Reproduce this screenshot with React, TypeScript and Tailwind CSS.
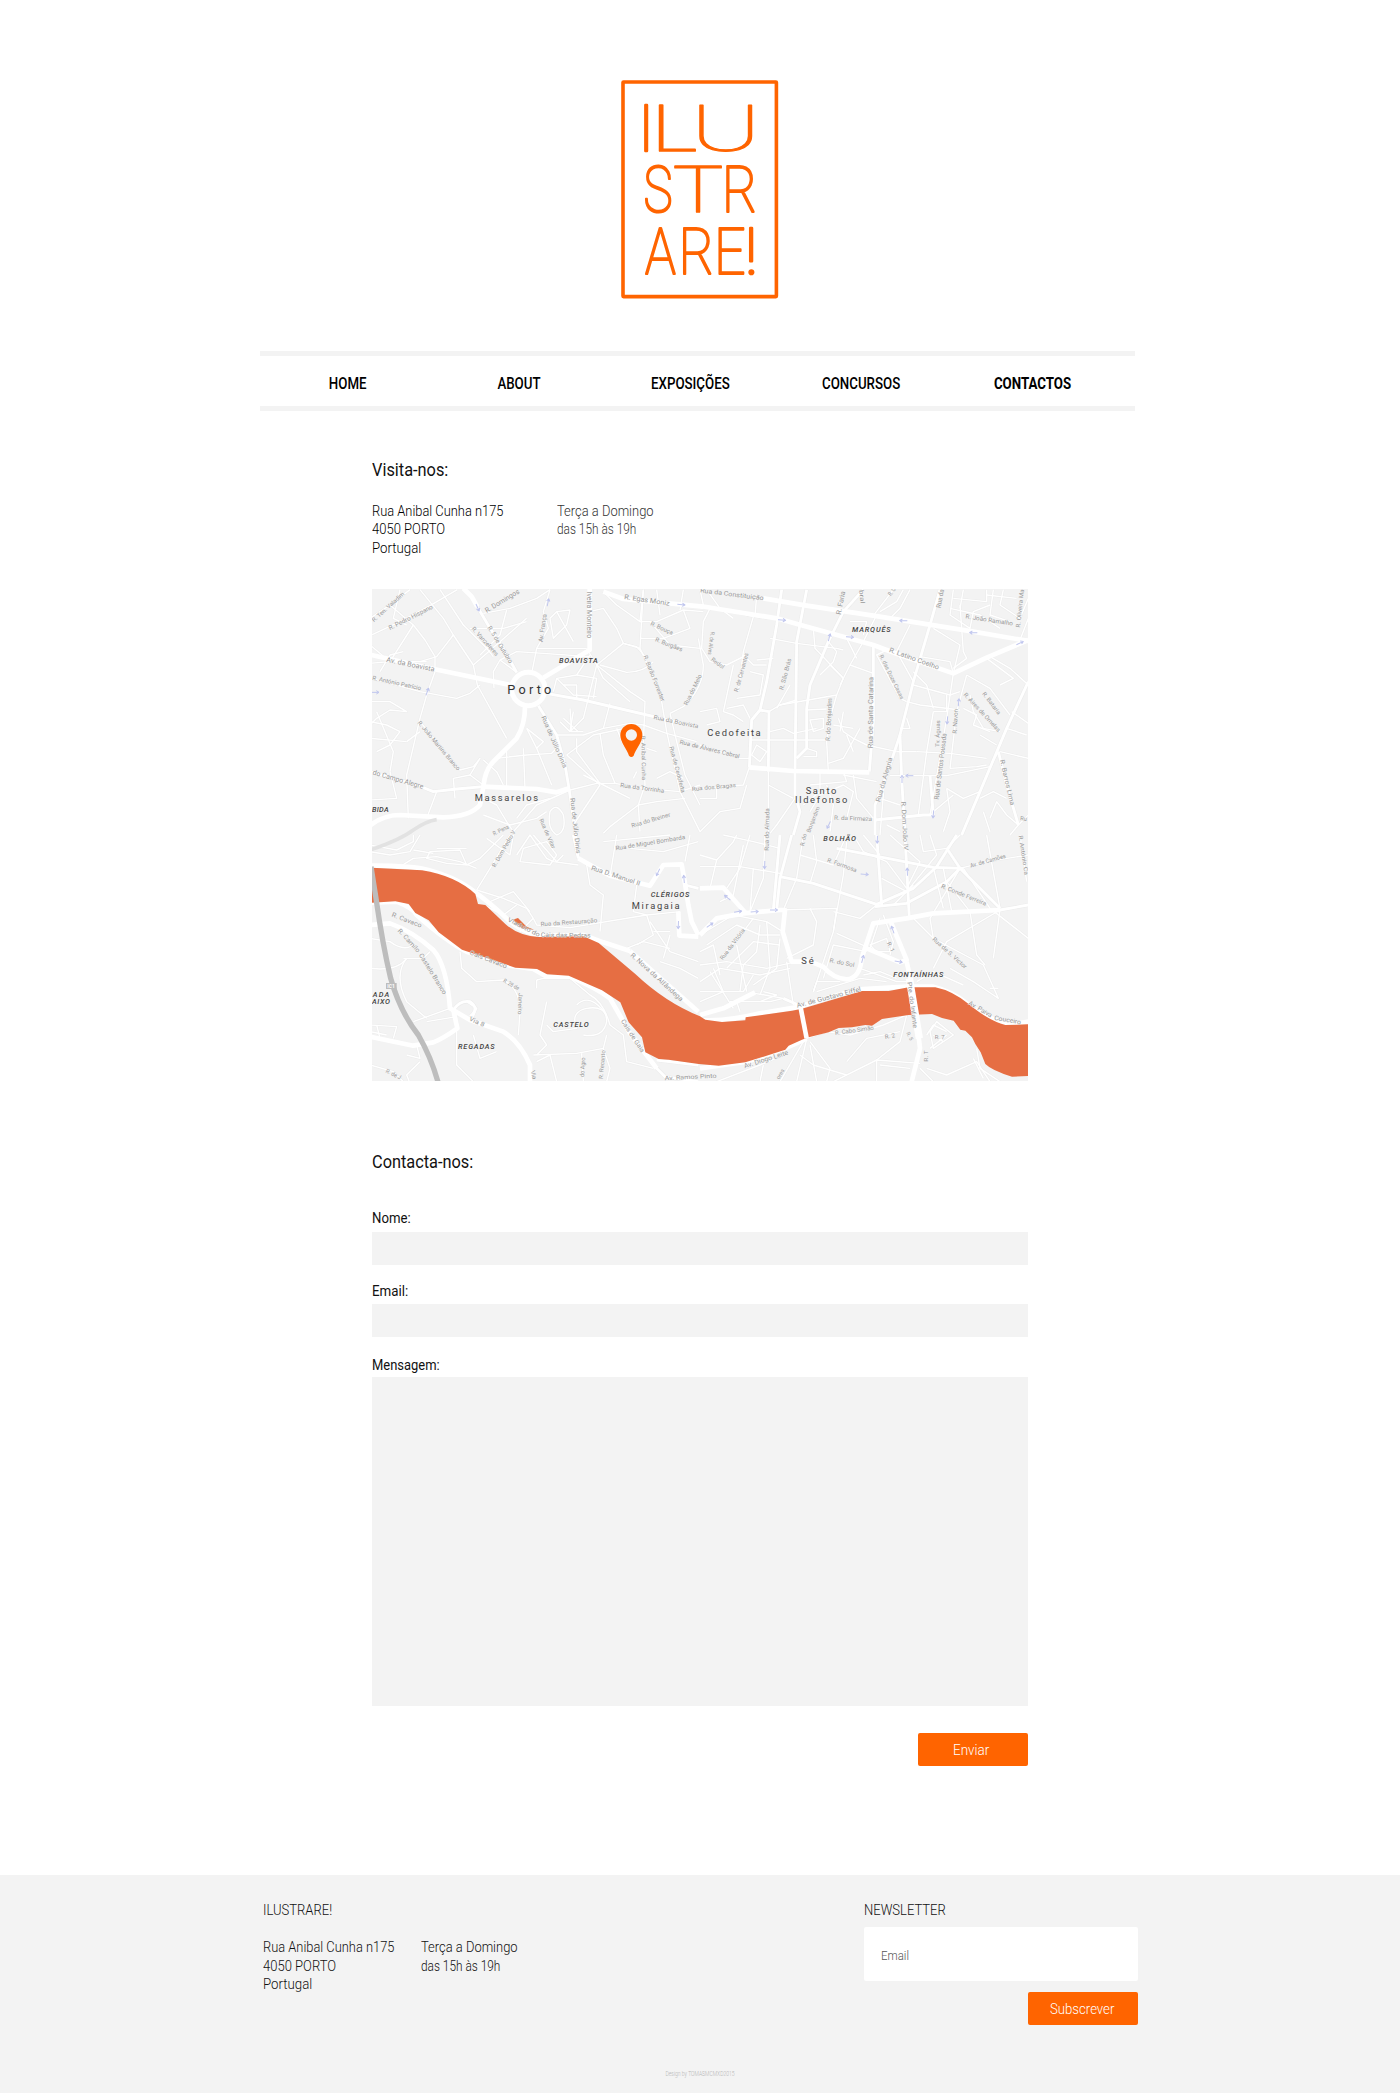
import React from "react";

type Quad = { dx: number; dy: number; major: string[]; mid: string[]; minor: string[] };
type Street = [string, number, number, number, number, number?];
type Arrow = [number, number, number];

// The map is authored at three units per pixel, in four sheets.
const sheets: Quad[] = [
  {
    dx: -6,
    dy: -12,
    major: [
      "M0 209 L180 250 L420 300",
      "M520 278 L600 230 L659 195 L659 10",
      "M700 20 L760 42 L1000 65",
      "M465 365 Q465 420 440 460 L370 530 Q345 555 340 605 L330 660 Q300 695 220 697 L90 690 Q40 690 0 722",
      "M340 605 L500 612 L560 622 L597 610",
      "M280 10 L305 35 L322 65",
    ],
    mid: [
      "M505 362 L560 450 L585 540 L597 610 L625 805",
      "M322 65 L360 130 L400 190 L440 262",
      "M0 560 L140 600 L190 620 L260 612 L340 605",
      "M528 325 L640 345 L780 378 L980 425",
    ],
    minor: [
      "M0 152 L90 110 L180 62 L262 14", "M0 100 L60 60 L120 14", "M60 60 L130 120 L165 165 L195 215 L195 250",
      "M150 14 L220 100 L250 150 L310 240 L322 300 L410 460", "M130 120 L60 230 L0 235", "M250 150 L200 215 L150 230",
      "M210 14 L280 120 L350 190 L370 215", "M340 85 L420 70 L500 40 L540 14", "M540 14 L520 80 L535 130 L500 190 L487 255",
      "M0 280 L80 300 L150 320 L260 340 L300 325 L330 300", "M195 260 L170 330 L150 400 L110 570 L115 700",
      "M0 350 L60 350 L110 380 L60 375 L20 400 L0 420", "M0 410 L50 420 L90 440 L60 480 L20 500", "M0 460 L110 470",
      "M20 380 L70 500 L60 560", "M150 410 L200 470 L270 555 L310 545 L330 520 L300 570 L340 600",
      "M300 570 L250 580 L255 640", "M340 525 L380 560 L400 600", "M410 490 L410 610", "M380 520 L470 510 L545 505 L560 490",
      "M460 490 L465 610", "M470 430 L500 490 L545 600", "M470 430 L520 470 L500 490", "M440 262 L390 225 L370 260 L372 310",
      "M390 225 L440 200 L520 205 L659 215", "M500 190 L600 190 L650 190", "M540 100 L560 80 L600 75 L590 120 L550 160 Z",
      "M560 80 L610 170", "M650 190 L680 240 L780 320 L825 350 L820 480", "M680 240 L640 400 L600 440", "M680 240 L760 175 L800 185 L830 220",
      "M660 210 L620 270 L560 280 L550 320", "M560 280 L610 330 L680 335", "M620 270 L680 280 L670 340",
      "M580 300 L620 300 L620 340", "M720 355 L700 430 L640 450 L560 450", "M700 430 L780 415 L820 420 L890 445 L980 470",
      "M590 510 L670 450 L790 425", "M690 445 L700 510 L735 595 L680 595 L600 615 L500 660 L430 740",
      "M735 595 L820 610 L930 620", "M620 460 L620 500 L690 595", "M590 510 L690 600", "M610 720 L690 600",
      "M680 240 L700 280 L780 350", "M610 380 L600 440 L570 410", "M580 400 L625 440", "M600 370 L605 440 L640 440",
      "M659 80 L700 70 L740 130 L760 175 L810 190", "M700 20 L740 60 L810 110 L820 14", "M820 14 L810 190 L870 320 L890 440 L930 620 L990 740",
      "M810 110 L860 110 L940 75 L1000 80", "M810 160 L880 160 L960 130 L940 75", "M860 14 L870 90", "M940 14 L930 75",
      "M840 110 L900 180 L990 190", "M690 240 L770 262 Q820 262 850 230", "M900 385 L940 365 Q1000 310 1000 240 L985 160", "M900 385 L920 470 L945 570 L990 660",
      "M820 480 L825 600 L805 660 L810 740", "M805 660 L860 650 L945 640", "M805 660 L720 725 L700 745", "M860 500 L830 490",
      "M930 620 L990 600", "M340 640 L380 660 L410 710 L430 740", "M340 690 L420 720 L500 700 L530 680",
      "M540 680 Q560 650 580 690 Q590 740 560 750 Q530 730 540 680 Z", "M440 700 L470 660 L540 640", "M200 620 L170 700", "M60 560 L80 640 L0 645",
      "M90 14 L70 100 L110 120", "M0 180 L60 230 L170 230", "M310 240 L390 170 L470 100", "M300 130 L400 130 L470 110",
      "M410 75 L390 150 L330 210", "M30 260 L60 210 L100 200", "M110 470 L150 440", "M640 570 L700 600 L780 640",
      "M740 430 L760 480 L790 490", "M790 580 L800 560 M860 580 L900 560 L940 580",
    ],
  },
  {
    dx: 984,
    dy: -12,
    major: [
      "M0 63 L230 100 L310 122 L520 180 L600 210 L760 265 L860 218 L985 165",
      "M190 40 L320 62 L520 92 L820 140 L985 168",
      "M148 547 L280 558 L508 562",
    ],
    mid: [
      "M245 14 L230 120 L200 290 L180 375 L155 405 L148 547",
      "M320 14 L290 170 L285 560 L285 630 L300 680 L280 750",
      "M520 180 L520 410 L508 560", "M720 14 L690 120 L640 290 L600 450 L560 570 L525 660 L525 750",
      "M180 375 L207 380 L205 560", "M290 520 L320 490 L320 370 L330 300 L385 170 L430 80 L490 14",
      "M985 290 L920 430 L840 620 L785 750", "M600 450 L605 580 L615 750",
      "M895 500 L920 600 L955 720", "M690 570 L700 690 L670 690 L525 705",
    ],
    minor: [
      "M0 14 L10 60", "M20 14 L60 70 L100 100", "M30 70 L10 110 L5 190 L30 230 L80 240 L140 210", "M60 70 L160 95 L130 200 L115 320",
      "M170 30 L165 95 L200 100", "M210 160 L290 175 L410 190 L430 195", "M340 130 L345 190 L430 280 L410 330 L240 360 L207 380",
      "M385 170 L410 200 L400 230 L360 270", "M390 240 L430 280", "M240 360 L290 345", "M410 330 L390 400 L380 470 L385 560",
      "M450 240 L520 265", "M490 170 L450 240 L420 300", "M470 220 L440 160", "M320 375 L380 372", "M210 440 L250 430 L280 445 L350 430",
      "M150 465 L380 465", "M330 405 L370 400 L370 430 L340 440 Z", "M320 490 L350 500 L350 515 L310 515", "M385 535 L430 520 L480 430",
      "M415 400 L430 440 L460 460 L500 480 L590 500", "M400 420 L460 430 M430 380 L420 440", "M440 450 L460 500",
      "M100 240 L70 380 L100 390 L130 410", "M150 260 L190 270 L180 330 L110 340", "M130 210 L160 240 L200 240", "M170 225 L220 220",
      "M80 370 L130 360 L150 400", "M0 380 L50 370 L60 410 L20 420", "M170 480 L155 510 L180 530 L200 500 Z", "M0 480 L120 520 L148 520",
      "M0 610 L130 600 L148 547", "M0 640 L50 640 L50 600", "M140 600 L120 670 L60 680 L0 740", "M205 560 L205 750",
      "M205 600 L280 640", "M270 300 L230 370", "M285 640 L230 720 L210 745", "M330 600 L440 590 L430 560",
      "M330 680 L360 630 L430 600 L460 620 L440 700", "M380 600 L400 660 L390 740", "M460 570 L470 640 L520 700", "M530 590 L430 570",
      "M360 560 L360 620 L310 660", "M570 100 L600 70 L630 14", "M540 80 L590 50 L610 14", "M520 92 L560 40 L580 14",
      "M490 170 L530 90", "M450 110 L500 110 L490 150", "M630 120 L590 200 L640 290", "M560 195 L530 210 L600 340 L620 350",
      "M640 300 L750 330 L780 320", "M620 350 L660 360 L780 375", "M640 260 L680 300 L700 370", "M660 215 L750 230 L760 265",
      "M760 265 L740 400 L690 690", "M800 270 L770 380 L750 550", "M700 380 L680 500 L655 690", "M700 380 L740 380 L740 330",
      "M650 500 L750 505 L860 520", "M570 572 L740 572 L870 545 L895 500", "M590 500 L650 500", "M620 400 L630 430 L600 430",
      "M750 550 L830 545 L860 540", "M760 14 L750 90 L810 130 L820 80 L870 60", "M760 40 L860 50 L860 14", "M750 70 L840 90 L900 130",
      "M790 14 L780 70", "M880 14 L870 90 L930 110", "M910 14 L900 60 L960 100 L985 40", "M860 30 L950 40", "M700 130 L780 180 L760 265",
      "M780 60 L790 200 L800 220 L760 250", "M960 165 L985 100", "M690 120 L760 130 L820 140", "M870 215 L930 250 L985 300",
      "M860 220 L940 280 L900 300", "M800 270 L870 310 L930 390", "M810 330 L820 380 L850 430 L900 440", "M790 370 L830 390 L820 420 L870 440",
      "M840 450 L890 480", "M920 430 L980 450", "M935 380 L985 415", "M900 500 L985 520", "M740 610 L750 680 L730 740", "M740 610 L790 640 L840 620",
      "M840 640 L880 620 L920 640", "M870 700 L890 650 L920 690 L955 720 L985 690", "M850 680 L870 740", "M955 720 L930 750", "M700 680 L760 630",
      "M555 570 L540 750", "M560 720 L600 740", "M540 640 L600 660",
    ],
  },
  {
    dx: -6,
    dy: 738,
    major: [
      "M0 92 Q130 92 175 105 Q250 125 300 160 Q370 210 420 260 Q470 300 530 302 L640 300 L700 322 L780 348",
      "M625 70 L670 95 L720 122 L840 152 L880 90 L935 88 L945 145 L955 210 L965 260 L985 300",
      "M925 230 L928 302 L985 305",
      "M0 270 L60 265 Q130 290 190 345 Q230 390 240 520 L300 555 L400 590 Q450 620 480 690 L480 750",
      "M0 203 L80 200 Q130 220 140 240 Q230 320 290 350 L420 392 L490 402 L530 425 L600 425 Q680 460 720 490 Q760 560 780 595 L860 700",
      "M250 525 L262 580 Q220 610 190 622 L130 632 L0 605",
      "M780 348 Q860 420 985 530",
    ],
    mid: ["M250 525 Q270 495 300 500 Q330 520 300 545", "M610 0 L625 70", "M945 150 L985 160", "M850 690 L885 725 L985 740", "M860 675 L985 690"],
    minor: [
      "M0 30 L80 45 L130 20 L130 0", "M0 50 L60 60 L120 50 L150 0", "M90 95 L130 70 L200 65 L270 80 L320 100", "M170 70 L180 50 L270 45 L290 90 L230 85 Z",
      "M130 45 L190 55 M200 40 L290 40", "M320 165 L360 100 L420 0", "M350 10 L420 60 L430 0", "M440 60 L480 0 L530 70 L550 80 L625 90",
      "M460 40 L530 20 L560 60 L540 90 L450 80 Z", "M490 0 L560 80 L580 60", "M320 165 L400 190 L470 220 L490 250 L450 290", "M360 200 L430 170 L480 230",
      "M340 210 L400 240 L440 210", "M490 250 L500 270 L600 278 L830 240 L930 230", "M650 90 L660 150 L700 180 L690 290", "M740 0 L720 125",
      "M780 40 L880 50 L985 20", "M700 20 L900 0", "M960 0 L945 80", "M800 150 L790 230 L830 240", "M830 240 L850 300 L800 330",
      "M850 290 L900 290 M770 340 L820 320 L900 340", "M840 260 L900 350 L985 380", "M870 380 L930 400 L985 430", "M900 300 L880 370",
      "M0 310 L60 320 Q100 350 130 330", "M0 400 Q80 410 110 370", "M100 370 L160 370 L180 350", "M130 560 L240 520", "M170 560 L260 545 L262 580",
      "M110 370 Q70 420 110 500 L170 550", "M0 570 L80 575 L70 610", "M20 570 L30 610", "M0 590 L50 600", "M140 630 L150 670 L110 660", "M0 690 L70 710 L100 740",
      "M150 680 L110 720 L120 745", "M270 350 L275 400 L320 440 L400 435 Q450 460 450 530 L445 600", "M290 500 L320 520 L310 545",
      "M260 580 L260 690 L310 740", "M310 600 L330 670 L380 650", "M500 435 L520 430 L610 430", "M500 435 L500 460", "M600 430 L660 480 Q700 500 720 570",
      "M530 570 L550 590 L620 580 Q600 530 650 520 Q710 510 710 560 Q700 610 640 600", "M620 510 Q660 470 710 540", "M530 500 L510 600 L530 630 L500 660",
      "M490 660 L620 655 L700 640 L710 600", "M635 655 L640 740", "M700 640 L720 700 L710 740", "M720 570 L760 600 L770 680 L850 700",
      "M400 0 L330 70 L290 90", "M500 680 L540 660 L560 740",
    ],
  },
  {
    dx: 984,
    dy: 738,
    major: [
      "M0 300 L50 250 L130 235 L240 225 L255 225 L248 290 L275 380 L330 380 L370 395 Q400 430 440 433 Q480 430 485 370 L520 265 L620 250 L700 235 L900 225",
      "M0 160 L70 158 L135 232", "M500 340 L600 382 L620 375 L570 255", "M620 380 L640 470 L660 640 L635 740",
      "M0 540 L70 520 L165 472", "M0 555 Q80 560 180 535 L300 515 Q400 480 490 462 L620 455 L700 455 Q760 470 800 505 Q880 560 930 570 L985 560",
      "M0 700 L140 680 Q240 650 320 610",
    ],
    mid: [
      "M240 0 L220 225", "M275 0 L240 130 L230 225", "M240 125 L340 145 L530 208 L640 160 L710 95 L770 0", "M530 0 L545 210", "M615 0 L628 250",
      "M410 40 L700 97 L790 100", "M525 215 L620 205 L740 140 L780 100", "M740 40 L780 100 L900 220", "M250 490 L295 510", "M900 225 L985 210",
    ],
    minor: [
      "M0 60 L50 75 L100 20 L110 0", "M50 75 L30 160", "M0 95 L120 95 L240 115", "M150 0 L120 100 L80 160", "M70 0 L160 20 L240 40", "M130 30 L100 180 L60 200",
      "M195 0 L190 130 L150 230", "M160 100 L150 230", "M310 0 L290 130 L250 225", "M340 0 L350 80 L330 145", "M300 60 L400 90 L440 0", "M440 20 L430 120 L400 290",
      "M240 225 L410 220 L400 290 L340 470", "M330 220 L350 260 L340 330 L260 370", "M410 295 L510 340 L540 250", "M400 230 L480 250 L530 210",
      "M460 0 L490 50 L560 80 L620 160", "M490 0 L540 60", "M570 0 L660 80 L620 160", "M545 130 L620 170 L710 60 L690 0", "M580 210 L640 150",
      "M660 0 L670 50 L740 40 L780 0", "M700 97 L730 220", "M730 100 L755 230", "M740 140 L810 230 L830 360 L855 390", "M780 100 L860 80 L985 60",
      "M790 100 L870 220 L985 310", "M860 0 L900 220", "M960 0 L980 140", "M780 100 L690 250 L700 310", "M900 225 L740 320 L700 400", "M900 225 L880 370",
      "M640 250 L700 310 L850 390 L895 490 L880 480 L820 440 L750 400", "M870 460 L895 460", "M650 440 L700 410 L790 450", "M550 240 L580 320 L570 360",
      "M510 330 L560 310 L570 350 L530 350 Z", "M490 420 L540 410 L590 430", "M480 400 L590 440 L620 440", "M350 470 L480 430 L560 440",
      "M340 470 L350 440 L420 440", "M370 430 L400 330 L500 350", "M0 300 L100 240 L200 260 L248 290", "M20 330 L110 270 L180 300 L240 300", "M60 370 L130 290 L160 250",
      "M80 400 L160 320 L240 330", "M0 390 L80 380 L200 400 L290 380", "M0 440 L60 400 L180 420 L270 400", "M40 400 L70 470 L0 500", "M0 470 L130 470 L160 420",
      "M110 330 L140 470", "M180 270 L170 350 L130 390 L120 470", "M200 260 L210 400 L180 480", "M0 350 L40 330 L60 420", "M240 310 L230 400 L160 450",
      "M90 500 L210 500 L250 490", "M165 475 L250 490", "M190 470 L230 480 L180 500", "M60 520 L110 500 L120 530", "M30 410 L100 520", "M260 380 L280 510",
      "M320 610 L380 590 L450 600 L550 570 L620 540", "M320 612 L290 740", "M310 620 L240 740", "M330 620 L390 700 L380 740", "M330 630 L350 740",
      "M300 660 L340 690 L440 720", "M400 740 L530 675 L660 685", "M530 675 L530 740", "M530 675 L600 620 L620 540", "M540 690 L630 700", "M440 680 L500 610 L600 590",
      "M690 590 L710 560 L760 600 L700 640 Z", "M680 600 L700 570 L740 590 M700 600 L730 620 M690 640 L740 600", "M680 700 L740 720 L830 680 L870 740",
      "M820 670 L850 730", "M700 740 L660 700", "M830 640 L840 700 L900 740", "M50 740 L180 690 L250 660", "M180 740 L190 690",
    ],
  },
];

const streets: { dx: number; dy: number; items: Street[]; arrows: Arrow[] }[] = [
  {
    dx: -6,
    dy: -12,
    items: [
      ["R. Ten. Valadim", 12, 112, 104, 28, 17], ["R. Pedro Hispano", 60, 136, 190, 70, 19], ["R. Domingos", 350, 84, 450, 24], ["R. Egas Moniz", 762, 42, 898, 62],
      ["Av. França", 518, 172, 530, 88, 19], ["R. 5 de Outubro", 352, 128, 418, 236, 19], ["R. Vanzeleres", 304, 132, 378, 214, 18], ["Av. da Boavista", 48, 230, 192, 260],
      ["R. António Patrício", 6, 284, 152, 316, 18], ["lveira Monteiro", 652, 20, 652, 160, 20], ["R. Bouça", 840, 120, 906, 150, 18], ["R. Burgães", 854, 168, 935, 200, 18],
      ["R. Barão Forrester", 820, 214, 874, 350, 18], ["Rua da Boavista", 850, 402, 984, 430, 18], ["Rua do Melo", 952, 362, 996, 272, 18], ["Rua de Júlio Dinis", 514, 396, 580, 550, 19],
      ["R. João Martins Branco", 142, 414, 262, 558, 18], ["do Campo Alegre", 7, 568, 158, 612], ["Rua de Álvares Cabral", 928, 476, 1107, 520, 18], ["R. Aníbal Cunha", 814, 452, 816, 586, 17],
      ["Rua de Cedofeita", 898, 486, 934, 624, 18], ["Rua da Torrinha", 750, 606, 882, 624, 18], ["Rua de Júlio Dinis", 601, 640, 619, 806, 19], ["R. Pena", 372, 752, 418, 730, 18],
      ["Rua do Breiner", 786, 728, 902, 694, 18], ["Rua de Vilar", 508, 704, 546, 792, 17], ["Rua dos Bragas", 966, 618, 1098, 606, 17],
    ],
    arrows: [[323, 68, 65], [534, 52, -78], [934, 59, 5], [172, 320, -70], [16, 322, 0]],
  },
  {
    dx: 984,
    dy: -12,
    items: [
      ["Rua da Constituição", 0, 22, 190, 46, 19], ["R. Faria", 422, 90, 436, 20], ["R. João Ramalho", 796, 100, 938, 122, 18], ["R. Oliveira Ma", 960, 128, 972, 14, 18],
      ["Rua da", 722, 70, 732, 14, 20], ["R. C", 572, 34, 588, 14, 18], ["bral", 478, 16, 482, 56, 18], ["R. de Alves", 32, 140, 24, 208, 17], ["Redol", 32, 226, 68, 252, 17], ["R. de Cervantes", 114, 322, 146, 206, 18],
      ["R. São Brás", 250, 316, 274, 222, 18], ["R. Latino Coelho", 566, 200, 714, 254, 20], ["R. das Doze Casas", 538, 212, 602, 344, 17], ["R. do Bonjardim", 390, 468, 396, 340, 19],
      ["Rua de Santa Catarina", 518, 490, 520, 276, 21], ["Tv. Águas", 718, 486, 720, 406, 17], ["R. Navon", 770, 446, 774, 372, 18], ["Rua de Santos Pousada", 716, 644, 740, 446, 20],
      ["R. Aires de Ornelas", 790, 330, 894, 442, 18], ["R. Bataria", 846, 326, 894, 390, 17], ["Rua da Alegria", 540, 652, 578, 520, 20],
      ["R. Barros Lima", 900, 526, 932, 662, 19], ["R. da Firmeza", 402, 704, 516, 708, 18], ["R. Dom João IV", 604, 650, 612, 796, 19], ["Rua do Almada", 206, 797, 208, 670, 18],
      ["Bonjardim", 330, 744, 360, 668, 17], ["Ru", 960, 706, 980, 708, 18],
    ],
    arrows: [[246, 105, 5], [450, 156, 5], [388, 157, -75], [610, 107, 182], [820, 143, 182], [960, 174, -25], [776, 352, -85], [742, 406, 95], [628, 572, 180], [606, 582, -90], [700, 688, 95], [386, 720, 115]],
  },
  {
    dx: -6,
    dy: 738,
    items: [
      ["R. Dom Pedro V", 376, 98, 438, -10, 18], ["Rua D. Manuel II", 662, 104, 808, 152, 20], ["Rua de Miguel Bombarda", 738, 46, 946, 12, 18],
      ["Viaduto do", 412, 258, 506, 306, 18], ["Cais das Pedras", 512, 306, 662, 308, 19], ["Rua da Restauração", 512, 274, 682, 262, 18], ["R. Cavaco", 64, 244, 152, 278, 19],
      ["R. Camilo", 82, 288, 142, 354, 19], ["Castelo Branco", 146, 360, 220, 480, 19], ["Cais Cavaco", 298, 358, 408, 400, 19], ["R. 28 de", 398, 440, 444, 466, 17], ["Janeiro", 446, 474, 444, 538, 17],
      ["Via 8", 296, 556, 340, 576, 19], ["R. Nova da Alfândega", 780, 362, 932, 500, 20], ["Cais de Gaia", 752, 558, 814, 654, 19], ["R. de J", 46, 712, 90, 734, 18], ["Via", 482, 708, 488, 734, 18],
      ["do Agro", 642, 726, 646, 668, 18], ["R. Recanto", 698, 732, 706, 646, 17], ["Av. Ramos Pinto", 884, 736, 1040, 728, 18],
    ],
    arrows: [[864, 112, 115], [942, 132, -95], [925, 270, 92]],
  },
  {
    dx: 984,
    dy: 738,
    items: [
      ["R. do", 312, 34, 320, -2, 17], ["R. Formosa", 380, 80, 468, 112, 18], ["Av. de Camões", 812, 98, 918, 68, 18], ["R. António Ca", 956, 2, 974, 120, 17],
      ["R. Conde Ferreira", 722, 158, 856, 212, 18], ["Rua da Vitória", 68, 376, 136, 286, 17], ["R. do Sol", 388, 382, 462, 396, 18], ["Rua de S. Victor", 696, 314, 794, 402, 18], ["R. 1", 560, 324, 574, 352, 17],
      ["Av. de Gustavo Eiffel", 292, 518, 484, 468, 20], ["Pte. do Infante", 622, 442, 640, 580, 19], ["Av. Paiva", 804, 508, 872, 548, 19], ["Couceiro", 882, 554, 962, 568, 19],
      ["R. Cabo Simão", 406, 600, 522, 584, 18], ["R. 2", 556, 612, 586, 606, 18], ["R. 7", 704, 612, 734, 612, 18], ["R. 5", 618, 594, 630, 618, 16], ["R. T", 684, 680, 684, 646, 16], ["Av. Diogo Leite", 134, 700, 266, 658, 20], ["ores", 238, 734, 254, 706, 17],
    ],
    arrows: [[532, 14, 92], [194, 90, 92], [494, 118, 5], [622, 110, -92], [82, 188, 220], [30, 270, -35], [114, 230, -10], [164, 230, -5], [222, 225, 0], [578, 284, -110], [488, 372, -75], [596, 380, 10]],
  },
];

function StreetLabel({ item }: { item: Street }) {
  const [label, x1, y1, x2, y2, size = 21] = item;
  const angle = (Math.atan2(y2 - y1, x2 - x1) * 180) / Math.PI;
  return (
    <text
      transform={`translate(${x1} ${y1}) rotate(${angle})`}
      fontSize={size}
      textLength={Math.hypot(x2 - x1, y2 - y1)}
      lengthAdjust="spacingAndGlyphs"
    >
      {label}
    </text>
  );
}

function StreetMap() {
  return (
    <svg viewBox="0 0 1968 1476" className="block h-[492px] w-[656px] overflow-hidden bg-[#f3f3f3] font-['Roboto',sans-serif]" fill="none" strokeLinejoin="round">
      {sheets.map((s, i) => (
        <g key={i} transform={`translate(${s.dx} ${s.dy})`}>
          {s.minor.map((d) => <path key={d} d={d} stroke="#ebebeb" strokeWidth={7} />)}
          {s.mid.map((d) => <path key={d} d={d} stroke="#ececec" strokeWidth={12} />)}
        </g>
      ))}
      {sheets.map((s, i) => (
        <g key={i} transform={`translate(${s.dx} ${s.dy})`} stroke="#fff">
          {s.minor.map((d) => <path key={d} d={d} strokeWidth={4.2} />)}
          {s.mid.map((d) => <path key={d} d={d} strokeWidth={8.5} />)}
          {s.major.map((d) => <path key={d} d={d} strokeWidth={14} />)}
        </g>
      ))}
      <g transform="translate(-6 -12)">
        <circle cx="475" cy="312" r="50" fill="#f3f3f3" stroke="#fff" strokeWidth="15" />
        <path d="M0 795 Q90 765 130 735 Q170 708 200 704" stroke="#e2e2e2" strokeWidth="11" />
      </g>

      {/* Douro river */}
      <path
        fill="#e66e43"
        d="M0 836 L150 844 Q250 860 310 915 L318 945 L340 948 L400 1005 Q440 1040 500 1044 L635 1042 L680 1062 L790 1155 Q880 1240 984 1282 L1000 1292 L1050 1299 L1120 1294 L1121 1285 L1260 1265 L1290 1259 L1470 1206 L1550 1206 L1610 1195 L1690 1195 Q1740 1205 1790 1245 Q1850 1295 1900 1308 L1968 1306 L1968 1461 L1920 1463 Q1860 1445 1840 1425 L1826 1390 L1810 1365 L1800 1345 L1780 1325 L1765 1322 L1745 1295 L1710 1287 L1680 1275 L1610 1278 L1530 1290 L1500 1310 L1480 1308 L1440 1315 L1400 1317 L1370 1330 L1310 1345 L1290 1352 L1250 1370 L1240 1382 L1200 1395 L1120 1420 L1040 1430 L980 1425 L890 1412 L860 1410 L820 1390 L810 1345 L770 1300 L745 1240 L690 1204 L590 1160 L525 1156 L495 1140 L430 1136 L270 1082 L200 1030 L170 994 L130 972 L110 945 L70 937 L0 941 Z"
      />
      <path fill="#e66e43" d="M422 992 L438 987 L464 1013 L486 1022 L450 1018 Z" />
      <g transform="translate(-6 738)" stroke="#bdbdbd">
        <path d="M3 95 L18 190 Q38 330 62 430 Q90 530 145 600 Q185 670 205 745" strokeWidth="16" />
        <path d="M48 453 H80" strokeWidth="18" />
        <text x="52" y="459" fill="#fff" stroke="none" fontSize="15" fontWeight="700">IC1</text>
      </g>
      <g transform="translate(984 738)" stroke="#fff">
        <path d="M300 508 L320 610" strokeWidth="14" />
        <path d="M628 430 L658 610" strokeWidth="22" />
      </g>

      {streets.map((s, i) => (
        <g key={i} transform={`translate(${s.dx} ${s.dy})`}>
          <g fill="#999" stroke="#f7f7f7" strokeWidth="2" strokeOpacity=".6" paintOrder="stroke">
            {s.items.map((item) => <StreetLabel key={`${item[0]}${item[1]}`} item={item} />)}
          </g>
          {s.arrows.map(([x, y, a]) => (
            <path key={`${x}-${y}`} transform={`translate(${x} ${y}) rotate(${a})`} d="M-12 0 H10 M3 -5 L11 0 L3 5" stroke="#c0c6ee" strokeWidth="3" />
          ))}
        </g>
      ))}

      <g fill="#444" stroke="#f3f3f3" strokeWidth="3" paintOrder="stroke">
        <text x="406" y="315" fontSize="38" textLength="132" fill="#333">Porto</text>
        <g fontSize="28">
          <text x="308" y="637" textLength="190">Massarelos</text>
          <text x="1006" y="442" textLength="160">Cedofeita</text>
          <text x="1301" y="616" textLength="92">Santo</text>
          <text x="1269" y="643" textLength="157">Ildefonso</text>
          <text x="779" y="961" textLength="144">Miragaia</text>
          <text x="1288" y="1124" textLength="37">Sé</text>
        </g>
        <g fontSize="22" fontStyle="italic" fontWeight="500">
          <text x="561" y="223" textLength="116">BOAVISTA</text>
          <text x="1440" y="129" textLength="116">MARQUÊS</text>
          <text x="0" y="670" textLength="50">BIDA</text>
          <text x="836" y="925" textLength="116">CLÉRIGOS</text>
          <text x="1354" y="757" textLength="98">BOLHÃO</text>
          <text x="1564" y="1164" textLength="150">FONTAÍNHAS</text>
          <text x="2" y="1224" textLength="50">ADA</text>
          <text x="0" y="1245" textLength="54">AIXO</text>
          <text x="544" y="1313" textLength="106">CASTELO</text>
          <text x="258" y="1380" textLength="110">REGADAS</text>
        </g>
      </g>

      <path fill="#ff6400" fillRule="evenodd" d="M778 405 A33 33 0 0 1 811 439 C811 460 791 482 785 500 Q778 508 771 500 C765 482 745 460 745 439 A33 33 0 0 1 778 405 Z M778 421 A17 17 0 1 0 778 455 A17 17 0 1 0 778 421 Z" />
    </svg>
  );
}

const logoLetters: { ch: string; x: number; y: number; w: string; s: string }[] = [
  { ch: "I", x: 25.2, y: 71, w: "1", s: "2.4" }, { ch: "L", x: 53.2, y: 71, w: "1.38", s: "1.7" }, { ch: "U", x: 104.8, y: 71, w: "1.64", s: "1" },
  { ch: "S", x: 37, y: 132.3, w: ".76", s: "2.2" }, { ch: "T", x: 77, y: 132.3, w: "1.3", s: "1.7" }, { ch: "R", x: 118.8, y: 132.3, w: ".84", s: "2.2" },
  { ch: "A", x: 39.5, y: 193.8, w: ".8", s: "2.2" }, { ch: "R", x: 75.5, y: 193.8, w: ".84", s: "2.2" }, { ch: "E", x: 108.8, y: 193.8, w: ".86", s: "2.2" }, { ch: "!", x: 130.3, y: 193.8, w: "1", s: "2.6" },
];

function Logo() {
  return (
    <svg viewBox="0 0 158 219" className="block h-[219px] w-[158px] font-['Roboto',sans-serif]" fill="#ff6400" stroke="#ff6400" strokeLinejoin="round">
      <rect x="2" y="2" width="153.4" height="214.6" rx="0.5" fill="none" strokeWidth="3.6" />
      {logoLetters.map((l) => (
        <text key={`${l.x}-${l.y}`} transform={`translate(${l.x} ${l.y}) scale(${l.w} 1)`} textAnchor="middle" fontSize="64.5" fontWeight="100" strokeWidth={l.s}>
          {l.ch}
        </text>
      ))}
    </svg>
  );
}

const nav = ["HOME", "ABOUT", "EXPOSIÇÕES", "CONCURSOS", "CONTACTOS"];

function Address() {
  return (
    <address className="flex flex-col whitespace-nowrap not-italic">
      <span className="origin-left scale-x-[0.83]">Rua Anibal Cunha n175</span>
      <span className="origin-left scale-x-[0.84]">4050 PORTO</span>
      <span className="origin-left scale-x-[0.855]">Portugal</span>
    </address>
  );
}

function Hours() {
  return (
    <p className="flex flex-col whitespace-nowrap">
      <span className="origin-left scale-x-[0.835]">Terça a Domingo</span>
      <span className="origin-left scale-x-[0.765]">das 15h às 19h</span>
    </p>
  );
}

export default function App() {
  return (
    <div className="flex h-[2093px] w-[1400px] flex-col bg-white font-['Roboto',sans-serif] text-[15.5px] leading-[18.4px] text-[#111]">
      <header className="flex flex-col items-center pt-20">
        <a href="#" aria-label="Ilustrare" className="block"><Logo /></a>
        <nav className="mt-[52px] mr-[5px] flex h-[60px] w-[875px] items-center border-y-[5px] border-[#f3f3f3] pl-0.5">
          {nav.map((n) => (
            <a key={n} href="#" className={`flex w-[171.3px] justify-center pt-1.5 text-base text-black ${n === "CONTACTOS" ? "font-bold" : "font-medium"}`}>
              <span className="scale-x-[0.83]">{n}</span>
            </a>
          ))}
        </nav>
      </header>

      <main className="ml-[372px] w-[656px]">
        <h2 className="mt-[47px] h-6 origin-left scale-x-[0.86] text-[19px] leading-6">Visita-nos:</h2>
        <div className="mt-[20px] flex h-[78px] font-light text-black">
          <div className="w-[184.5px]"><Address /></div>
          <div className="text-[#333]"><Hours /></div>
        </div>
        <div className="mt-[9px]"><StreetMap /></div>

        <form>
          <h2 className="mt-[69px] h-6 origin-left scale-x-[0.86] text-[19px] leading-6">Contacta-nos:</h2>
          <label className="mt-[34px] block">
            <span className="block h-6 origin-left scale-x-[0.85] pt-[1px]">Nome:</span>
            <input className="block h-[33px] w-full bg-[#f3f3f3] px-3 outline-none" />
          </label>
          <label className="mt-[16px] block">
            <span className="block h-[23px] origin-left scale-x-[0.86] pt-[1px]">Email:</span>
            <input className="block h-[33px] w-full bg-[#f3f3f3] px-3 outline-none" />
          </label>
          <label className="mt-[17px] block">
            <span className="block h-[23px] origin-left scale-x-[0.835] pt-[2px]">Mensagem:</span>
            <textarea className="block h-[329px] w-full resize-none bg-[#f3f3f3] p-3 outline-none" />
          </label>
          <button type="button" className="mt-[27px] ml-auto flex h-[33px] w-[110px] items-center rounded-xs bg-[#ff6400] pt-0.5 pl-[35px] font-light text-white">
            <span className="origin-left scale-x-[0.87]">Enviar</span>
          </button>
        </form>
      </main>

      <footer className="mt-[109px] flex flex-1 flex-col bg-[#f3f3f3] font-light text-[#111]">
        <div className="ml-[263px] flex h-[180px] w-[875px] justify-between pt-[26px]">
          <div>
            <h3 className="origin-left scale-x-[0.84]">ILUSTRARE!</h3>
            <div className="mt-[19px] flex">
              <div className="w-[158px]"><Address /></div>
              <Hours />
            </div>
          </div>
          <div className="w-[274px]">
            <h3 className="origin-left scale-x-[0.84]">NEWSLETTER</h3>
            <div className="mt-[8px] flex h-[54px] items-center rounded-xs bg-white pt-px pl-[17px] text-[13.5px] text-[#555]">
              <span className="origin-left scale-x-[0.85]">Email</span>
            </div>
            <button type="button" className="mt-[11px] ml-auto flex h-[33px] w-[110px] items-center rounded-xs bg-[#ff6400] pl-[22px] text-white">
              <span className="origin-left scale-x-[0.85]">Subscrever</span>
            </button>
          </div>
        </div>
        <p className="mt-[13px] flex justify-center text-[7px] leading-[12px] text-[#b5b5b5]">
          <span className="scale-x-[0.72] whitespace-nowrap">Design by TOMASMCMXD2015</span>
        </p>
      </footer>
    </div>
  );
}
